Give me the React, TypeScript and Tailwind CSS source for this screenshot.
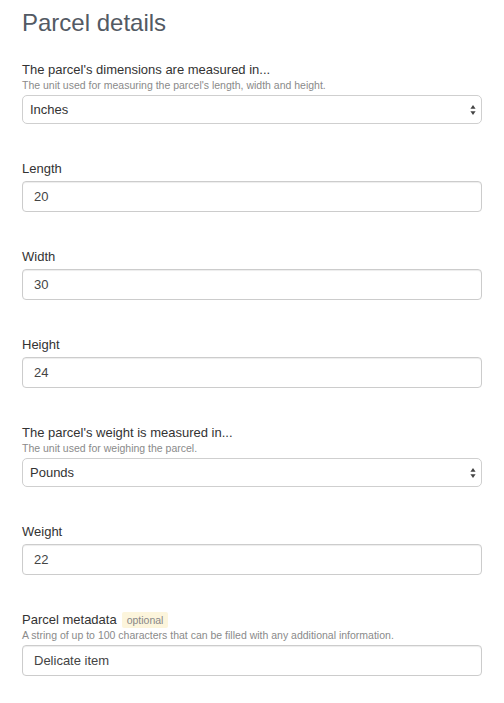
import type { ReactNode } from 'react';

const font = { fontFamily: '"Liberation Sans", Arial, Helvetica, sans-serif' };

function Label({ children }: { children: ReactNode }) {
  return <div className="flex h-[18px] items-center text-[13px] leading-[18px] text-[#333]">{children}</div>;
}

function Help({ children }: { children: ReactNode }) {
  return <p className="text-[10.5px] leading-[13px] text-[#8a8a8a]">{children}</p>;
}

function SelectField({ label, help, value, options }: { label: string; help: string; value: string; options: string[] }) {
  return (
    <div className="mt-[36px] first:mt-[25px]">
      <Label>{label}</Label>
      <Help>{help}</Help>
      <div className="relative mt-[3px]">
        <select
          defaultValue={value}
          className="block h-[29px] w-full appearance-none rounded-[5px] border border-[#cfcfcf] bg-white pl-[7px] pr-6 text-[13px] text-[#333] outline-none"
          style={font}
        >
          {options.map((o) => (
            <option key={o}>{o}</option>
          ))}
        </select>
        <svg
          className="pointer-events-none absolute right-[6px] top-1/2 -translate-y-1/2"
          width="6"
          height="11"
          viewBox="0 0 6 11"
        >
          <path d="M3 0.5 L5.6 4.2 L0.4 4.2 Z" fill="#444" />
          <path d="M3 10.5 L5.6 6.8 L0.4 6.8 Z" fill="#444" />
        </svg>
      </div>
    </div>
  );
}

function InputField({ label, value, help, badge }: { label: string; value: string; help?: string; badge?: string }) {
  return (
    <div className="mt-[36px]">
      <Label>
        {label}
        {badge ? (
          <span className="ml-[5px] rounded-[2px] bg-[#fcf5dc] px-[5px] text-[10.5px] leading-[16px] text-[#888]">
            {badge}
          </span>
        ) : null}
      </Label>
      {help ? <Help>{help}</Help> : null}
      <input
        defaultValue={value}
        className="mt-[3px] block h-[31px] w-full rounded-[4px] border border-[#cccccc] bg-white px-[11px] text-[13px] text-[#444] shadow-[inset_0_1px_1px_rgba(0,0,0,0.075)] outline-none"
        style={font}
      />
    </div>
  );
}

export default function App() {
  return (
    <div className="min-h-[703px] w-full bg-white px-[22px]" style={font}>
      <h1 className="pt-[10px] text-[24px] font-normal leading-[26px] text-[#535a64]">Parcel details</h1>
      <form className="w-[460px]" onSubmit={(e) => e.preventDefault()}>
        <SelectField
          label="The parcel's dimensions are measured in..."
          help="The unit used for measuring the parcel's length, width and height."
          value="Inches"
          options={['Inches', 'Centimeters']}
        />
        <InputField label="Length" value="20" />
        <InputField label="Width" value="30" />
        <InputField label="Height" value="24" />
        <SelectField
          label="The parcel's weight is measured in..."
          help="The unit used for weighing the parcel."
          value="Pounds"
          options={['Pounds', 'Kilograms']}
        />
        <InputField label="Weight" value="22" />
        <InputField
          label="Parcel metadata"
          badge="optional"
          help="A string of up to 100 characters that can be filled with any additional information."
          value="Delicate item"
        />
      </form>
    </div>
  );
}
